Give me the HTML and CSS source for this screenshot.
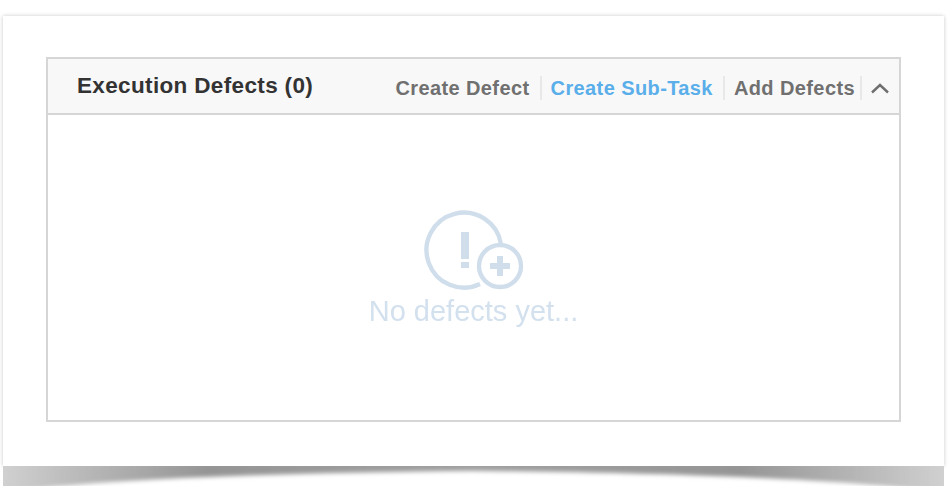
FILE: index.html
```html
<!DOCTYPE html>
<html lang="en">
<head>
    <meta charset="UTF-8">
    <meta name="viewport" content="width=device-width, initial-scale=1.0">
    <title>Execution Defects</title>
    <link rel="stylesheet" href="styles.css">
</head>
<body>

<div class="page">
    <div class="sheet">
        <div class="panel">
            <div class="panel-header">
                <h2 class="panel-title">Execution Defects (0)</h2>
                <div class="actions">
                    <a class="action">Create Defect</a>
                    <a class="action action-primary">Create Sub-Task</a>
                    <a class="action action-last">Add Defects</a>
                    <span class="collapse">
                        <svg width="20" height="12" viewBox="0 0 20 12" fill="none" stroke="#6f6f6f" stroke-width="2.4">
                            <path d="M2 10.5 L10 3 L18 10.5"/>
                        </svg>
                    </span>
                </div>
            </div>
            <div class="panel-body">
                <svg class="empty-icon" width="108" height="84" viewBox="0 0 108 84" fill="none" stroke="#d0deec">
                    <path stroke-width="4.4" d="M81 36 A37.5 37.5 0 1 0 60 76"/>
                    <rect x="41" y="24" width="8" height="27" fill="#d0deec" stroke="none"/>
                    <rect x="41" y="54" width="8" height="6" fill="#d0deec" stroke="none"/>
                    <circle stroke-width="4.4" cx="80" cy="58" r="21"/>
                    <path stroke-width="6" d="M80 48 V68 M70 58 H90"/>
                </svg>
                <p class="empty-text">No defects yet...</p>
            </div>
        </div>
    </div>
    <svg class="page-curl" width="941" height="20" viewBox="0 0 941 20">
        <defs>
            <linearGradient id="curlFill" x1="0" y1="0" x2="1" y2="0">
                <stop offset="0" stop-color="#d2d2d2"/>
                <stop offset="0.12" stop-color="#b0b0b0"/>
                <stop offset="0.22" stop-color="#959595"/>
                <stop offset="0.5" stop-color="#a0a0a0"/>
                <stop offset="0.78" stop-color="#959595"/>
                <stop offset="0.88" stop-color="#b0b0b0"/>
                <stop offset="1" stop-color="#d2d2d2"/>
            </linearGradient>
            <filter id="curlBlur" x="-2%" y="-50%" width="104%" height="200%">
                <feGaussianBlur stdDeviation="2"/>
            </filter>
            <clipPath id="curlClip"><rect width="941" height="20"/></clipPath>
        </defs>
        <g clip-path="url(#curlClip)">
            <path filter="url(#curlBlur)" fill="url(#curlFill)" d="M-6 -4 H947 V28 C870 15 700 7 470 5 C240 7 70 15 -6 28 Z"/>
        </g>
    </svg>
</div>

</body>
</html>
```

FILE: styles.css
```css
body {
    font-family: "Liberation Sans", Arial, sans-serif;
    background-color: #ffffff;
    margin: 0;
    overflow: hidden;
}
.page {
    padding: 16px 8px 0 3px;
}
.sheet {
    height: 450px;
    box-sizing: border-box;
    padding: 41px 43px 44px 43px;
    background-color: #ffffff;
    box-shadow: 0px 0px 4px rgba(0, 0, 0, 0.22);
}
.panel {
    height: 100%;
    box-sizing: border-box;
    display: flex;
    flex-direction: column;
    border: 2px solid #d6d6d6;
    filter: blur(0.4px);
}
.panel-header {
    height: 56px;
    box-sizing: border-box;
    flex: none;
    display: flex;
    align-items: center;
    justify-content: space-between;
    padding: 0 9px 0 29px;
    background-color: #f8f8f8;
    border-bottom: 2px solid #d6d6d6;
}
.panel-title {
    margin: 0 0 1px 0;
    font-size: 22.5px;
    letter-spacing: 0.35px;
    font-weight: bold;
    color: #333333;
}
.actions {
    display: flex;
    align-items: center;
    margin-top: 3px;
}
.action {
    padding: 0 10px 0 9px;
    font-size: 20px;
    letter-spacing: 0.4px;
    font-weight: bold;
    line-height: 24px;
    color: #707070;
    border-right: 2px solid #e8e8e8;
}
.action-primary {
    color: #5aaeea;
}
.action-last {
    padding-right: 5px;
}
.collapse {
    display: flex;
    padding-left: 8px;
}
.panel-body {
    flex: 1;
    display: flex;
    flex-direction: column;
    align-items: center;
    padding-top: 93px;
}
.empty-icon {
    margin-left: 1px;
}
.empty-text {
    margin: 3px 0 0 0;
    font-size: 29px;
    color: #d3e0ee;
}
.page-curl {
    display: block;
}
```
